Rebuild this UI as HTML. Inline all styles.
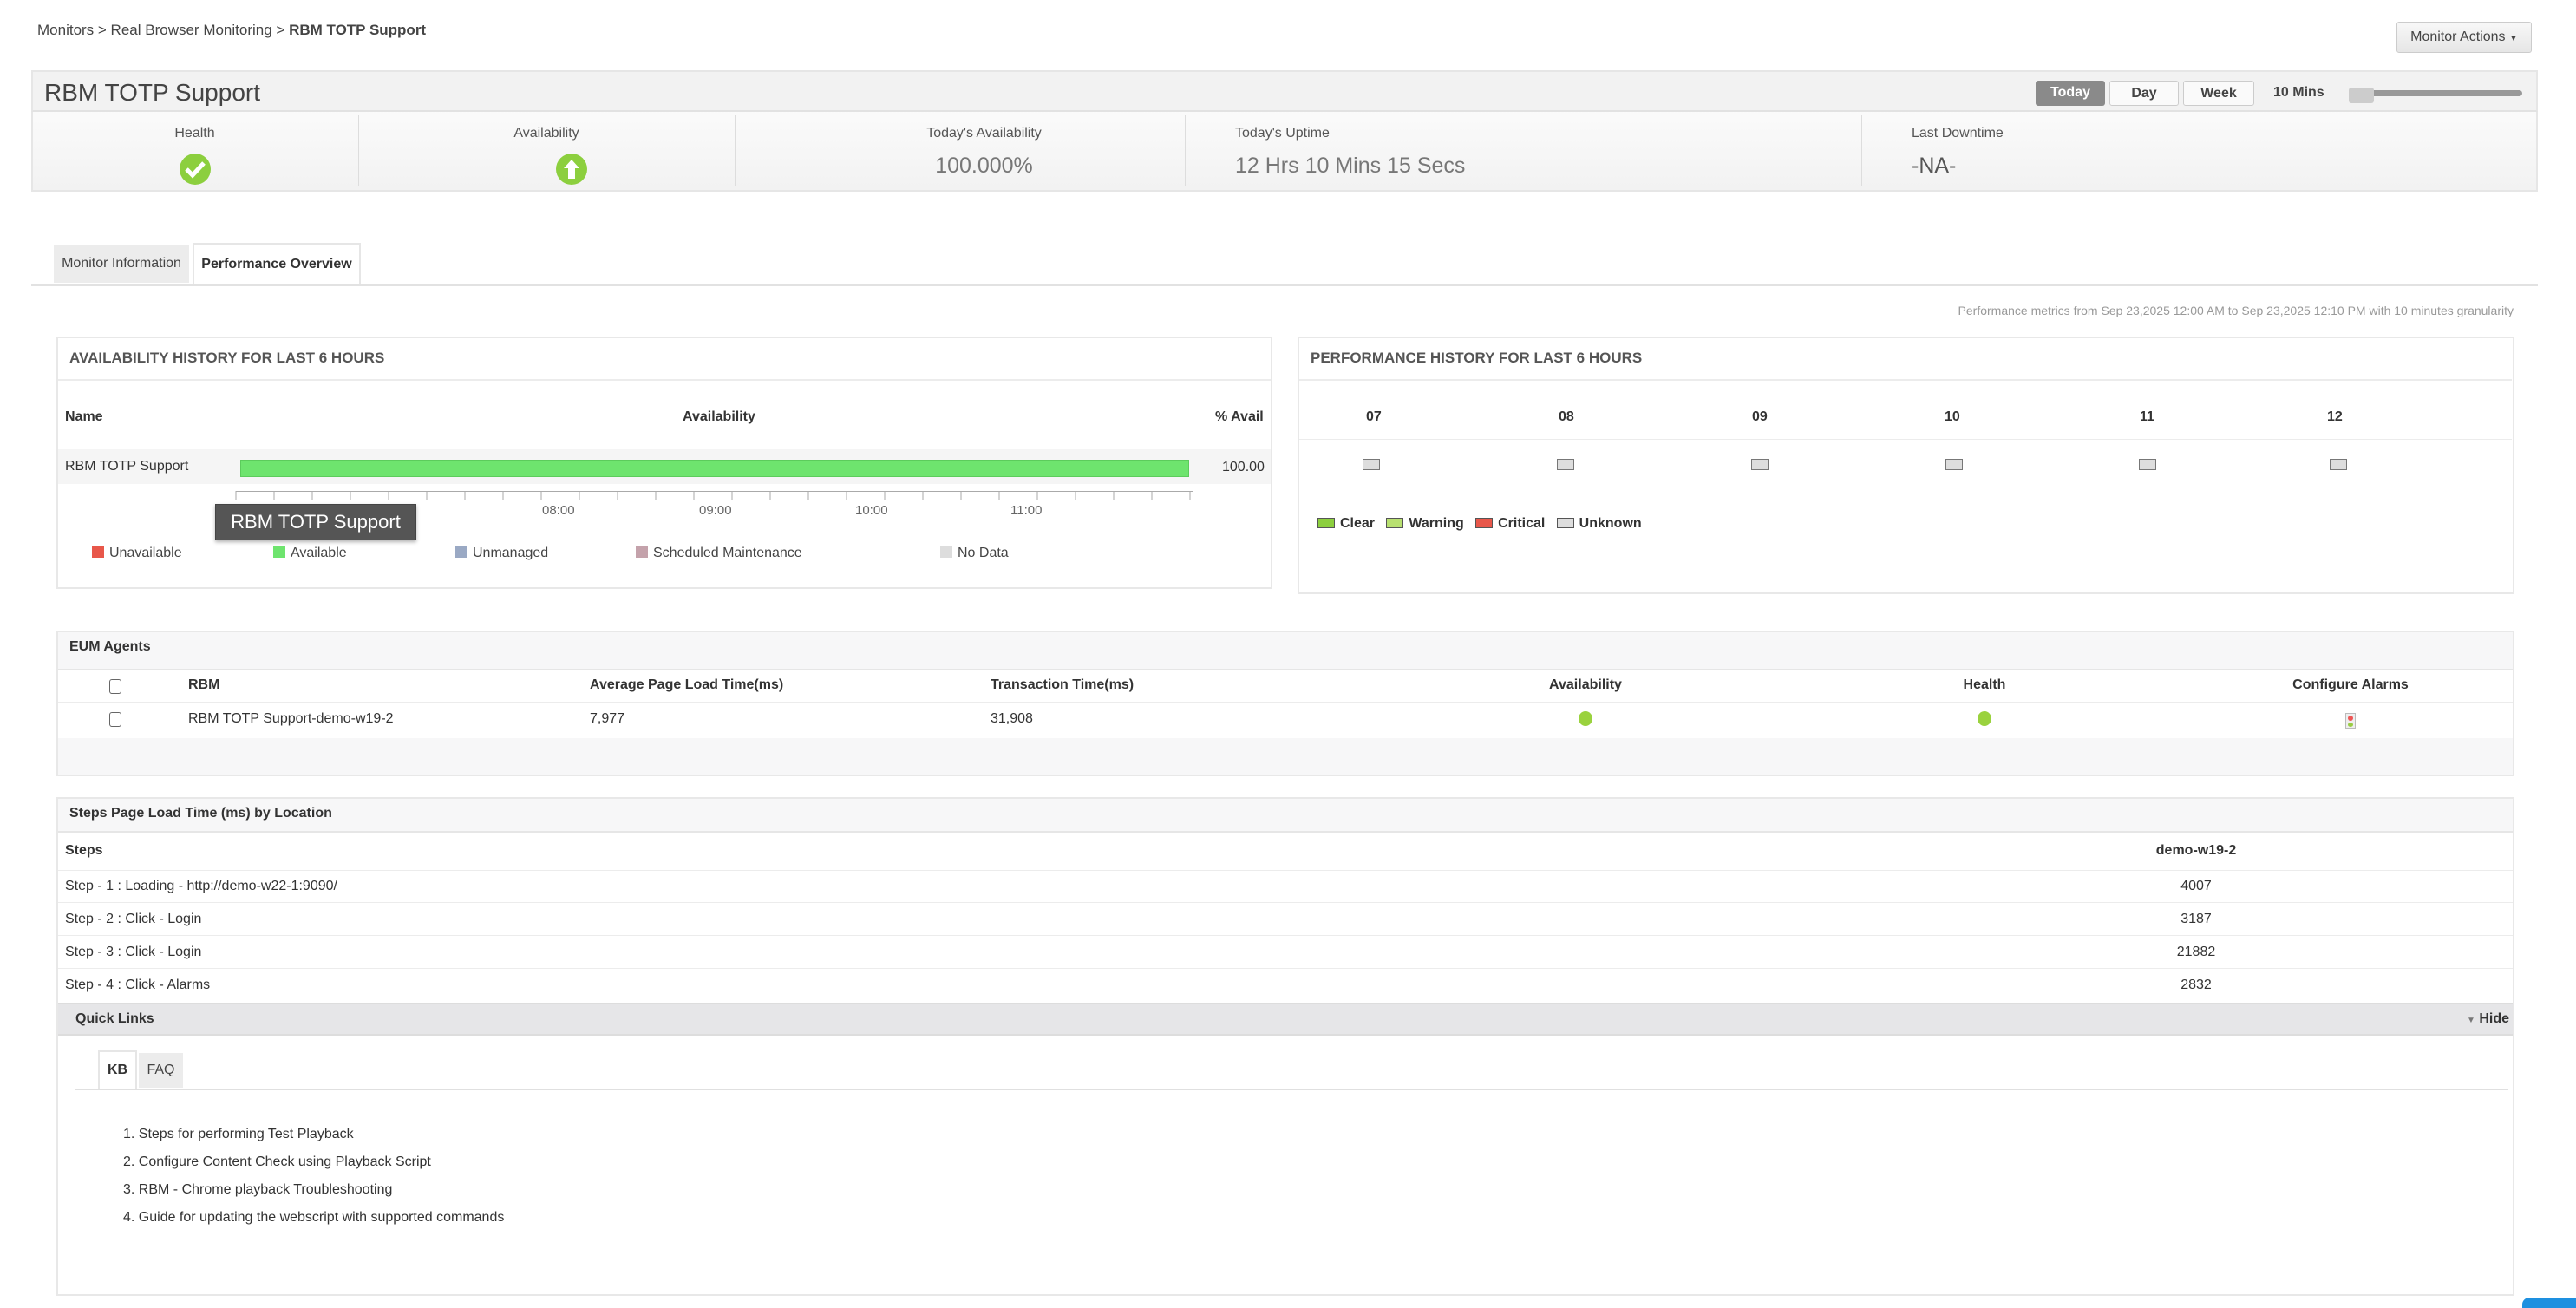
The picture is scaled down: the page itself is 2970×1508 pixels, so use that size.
<!DOCTYPE html>
<html><head><meta charset="utf-8"><style>
*{margin:0;padding:0;box-sizing:border-box}
body{width:2970px;height:1504px;background:#fff;font-family:"Liberation Sans",Arial,sans-serif;color:#333;position:relative;overflow:hidden;font-size:17px}
.a{position:absolute;white-space:nowrap}
.b{font-weight:bold}
.box{position:absolute;border:2px solid #e8e8e8;background:#fff}
.hl{position:absolute;height:2px;background:#ececec}
.sq{display:inline-block;width:14px;height:14px;vertical-align:-1px;margin-right:6px}
</style></head><body>

<div class="a" style="left:43px;top:25px;font-size:17px;color:#444">Monitors &gt; Real Browser Monitoring &gt; <b>RBM TOTP Support</b></div>
<div class="a" style="left:2763px;top:25px;width:156px;height:36px;border:1px solid #ccc;border-radius:3px;background:linear-gradient(#f8f8f8,#e6e6e6);font-size:16px;color:#444;text-align:center;line-height:34px">Monitor Actions <span style="font-size:10px">▼</span></div>

<!-- header -->
<div class="a" style="left:36px;top:81px;width:2890px;height:140px;border:2px solid #e6e6e6;background:linear-gradient(#fff,#f2f2f2)"></div>
<div class="a" style="left:36px;top:81px;width:2890px;height:48px;background:#f2f2f2;border:2px solid #e6e6e6;border-bottom:2px solid #e2e2e2"></div>
<div class="a" style="left:51px;top:91px;font-size:28px;color:#444">RBM TOTP Support</div>
<div class="a" style="left:2347px;top:93px;width:80px;height:29px;background:#8a8a8a;border-radius:3px;color:#fff;font-weight:bold;font-size:16px;text-align:center;line-height:27px">Today</div>
<div class="a" style="left:2432px;top:93px;width:80px;height:29px;background:#fafafa;border:1px solid #ccc;border-radius:3px;color:#444;font-weight:bold;font-size:16px;text-align:center;line-height:27px">Day</div>
<div class="a" style="left:2517px;top:93px;width:82px;height:29px;background:#fafafa;border:1px solid #ccc;border-radius:3px;color:#444;font-weight:bold;font-size:16px;text-align:center;line-height:27px">Week</div>
<div class="a b" style="left:2621px;top:98px;font-size:16px;color:#444">10 Mins</div>
<div class="a" style="left:2712px;top:104px;width:196px;height:7px;background:#999;border-radius:4px"></div>
<div class="a" style="left:2708px;top:101px;width:29px;height:18px;background:#ccc;border-radius:3px"></div>

<div class="a" style="left:413px;top:133px;width:1px;height:82px;background:#ddd"></div>
<div class="a" style="left:847px;top:133px;width:1px;height:82px;background:#ddd"></div>
<div class="a" style="left:1366px;top:133px;width:1px;height:82px;background:#ddd"></div>
<div class="a" style="left:2146px;top:133px;width:1px;height:82px;background:#ddd"></div>
<div class="a" style="left:36px;top:145px;width:377px;text-align:center;font-size:16px;color:#555">Health</div>
<div class="a" style="left:413px;top:145px;width:434px;text-align:center;font-size:16px;color:#555">Availability</div>
<div class="a" style="left:847px;top:145px;width:575px;text-align:center;font-size:16px;color:#555">Today's Availability</div>
<div class="a" style="left:847px;top:177px;width:575px;text-align:center;font-size:25px;color:#777">100.000%</div>
<div class="a" style="left:1424px;top:145px;font-size:16px;color:#555">Today's Uptime</div>
<div class="a" style="left:1424px;top:177px;font-size:25px;color:#777">12 Hrs 10 Mins 15 Secs</div>
<div class="a" style="left:2204px;top:145px;font-size:16px;color:#555">Last Downtime</div>
<div class="a" style="left:2204px;top:177px;font-size:25px;color:#555">-NA-</div>
<svg class="a" style="left:206px;top:176px" width="38" height="38"><circle cx="19" cy="19" r="18" fill="#8ccf3e"/><path d="M9 19 L16 26 L29 12" stroke="#fff" stroke-width="5" fill="none"/></svg>
<svg class="a" style="left:640px;top:176px" width="38" height="38"><circle cx="19" cy="19" r="18" fill="#8ccf3e"/><path d="M19 8 L28 18 L23 18 L23 30 L15 30 L15 18 L10 18Z" fill="#fff"/></svg>

<!-- tabs -->
<div class="a" style="left:62px;top:282px;width:156px;height:44px;background:#ececec;font-size:16px;color:#444;text-align:center;line-height:44px">Monitor Information</div>
<div class="a" style="left:222px;top:280px;width:194px;height:50px;background:#fff;border:2px solid #e6e6e6;border-bottom:none;font-size:16px;font-weight:bold;color:#333;text-align:center;line-height:46px">Performance Overview</div>
<div class="hl" style="left:36px;top:328px;width:2890px;background:#e2e2e2"></div>

<div class="a" style="right:72px;top:350px;font-size:14px;color:#999">Performance metrics from Sep 23,2025 12:00 AM to Sep 23,2025 12:10 PM with 10 minutes granularity</div>

<!-- availability box -->
<div class="box" style="left:65px;top:388px;width:1402px;height:291px"></div>
<div class="a b" style="left:80px;top:403px;font-size:17px;color:#555">AVAILABILITY HISTORY FOR LAST 6 HOURS</div>
<div class="hl" style="left:67px;top:437px;width:1398px"></div>
<div class="a b" style="left:75px;top:472px;font-size:16px">Name</div>
<div class="a b" style="left:787px;top:472px;font-size:16px">Availability</div>
<div class="a b" style="left:1401px;top:472px;font-size:16px">% Avail</div>
<div class="a" style="left:67px;top:518px;width:1398px;height:40px;background:#f5f5f5"></div>
<div class="a" style="left:75px;top:529px;font-size:16px">RBM TOTP Support</div>
<div class="a" style="left:277px;top:530px;width:1094px;height:20px;background:#6ee46e;border:1px solid #5ccc5c"></div>
<div class="a" style="left:1409px;top:530px;font-size:16px">100.00</div>
<div class="a" style="left:272px;top:566px;width:1104px;height:1px;background:#aaa"></div>
<svg class="a" style="left:271px;top:566px" width="1108" height="10"><g stroke="#aaa" stroke-width="1">
<path d="M1 0V10M45 0V10M89 0V10M133 0V10M177 0V10M221 0V10M265 0V10M309 0V10M353 0V10M397 0V10M441 0V10M485 0V10M529 0V10M573 0V10M617 0V10M661 0V10M705 0V10M749 0V10M793 0V10M837 0V10M881 0V10M925 0V10M969 0V10M1013 0V10M1057 0V10M1101 0V10"/></g></svg>
<div class="a" style="left:625px;top:580px;font-size:15px;color:#666">08:00</div>
<div class="a" style="left:806px;top:580px;font-size:15px;color:#666">09:00</div>
<div class="a" style="left:986px;top:580px;font-size:15px;color:#666">10:00</div>
<div class="a" style="left:1165px;top:580px;font-size:15px;color:#666">11:00</div>
<div class="a" style="left:248px;top:581px;width:232px;height:42px;background:#555;border:1px solid #444;box-shadow:0 2px 4px rgba(0,0,0,.3);color:#fff;font-size:22px;line-height:40px;text-align:center">RBM TOTP Support</div>
<div class="a" style="left:106px;top:629px;font-size:16px;color:#444"><span class="sq" style="background:#e8574a"></span>Unavailable</div>
<div class="a" style="left:315px;top:629px;font-size:16px;color:#444"><span class="sq" style="background:#6ee46e"></span>Available</div>
<div class="a" style="left:525px;top:629px;font-size:16px;color:#444"><span class="sq" style="background:#9aa9c4"></span>Unmanaged</div>
<div class="a" style="left:733px;top:629px;font-size:16px;color:#444"><span class="sq" style="background:#c4a2ab"></span>Scheduled Maintenance</div>
<div class="a" style="left:1084px;top:629px;font-size:16px;color:#444"><span class="sq" style="background:#ddd"></span>No Data</div>

<!-- perf box -->
<div class="box" style="left:1496px;top:388px;width:1403px;height:297px"></div>
<div class="a b" style="left:1511px;top:403px;font-size:17px;color:#555">PERFORMANCE HISTORY FOR LAST 6 HOURS</div>
<div class="hl" style="left:1498px;top:437px;width:1398px"></div>
<div class="hl" style="left:1498px;top:506px;width:1398px;height:1px"></div>
<div class="a b" style="left:1575px;top:472px;font-size:16px">07</div>
<div class="a b" style="left:1797px;top:472px;font-size:16px">08</div>
<div class="a b" style="left:2020px;top:472px;font-size:16px">09</div>
<div class="a b" style="left:2242px;top:472px;font-size:16px">10</div>
<div class="a b" style="left:2467px;top:472px;font-size:16px">11</div>
<div class="a b" style="left:2683px;top:472px;font-size:16px">12</div>
<div class="a" style="left:1571px;top:529px;width:20px;height:13px;background:#ddd;border:1px solid #777"></div>
<div class="a" style="left:1795px;top:529px;width:20px;height:13px;background:#ddd;border:1px solid #777"></div>
<div class="a" style="left:2019px;top:529px;width:20px;height:13px;background:#ddd;border:1px solid #777"></div>
<div class="a" style="left:2243px;top:529px;width:20px;height:13px;background:#ddd;border:1px solid #777"></div>
<div class="a" style="left:2466px;top:529px;width:20px;height:13px;background:#ddd;border:1px solid #777"></div>
<div class="a" style="left:2686px;top:529px;width:20px;height:13px;background:#ddd;border:1px solid #777"></div>
<div class="a b" style="left:1519px;top:595px;font-size:16px;color:#333">
<span class="sq" style="width:20px;height:12px;background:#8ccf3e;border:1px solid #555"></span>Clear&nbsp;&nbsp;
<span class="sq" style="width:20px;height:12px;background:#b8e070;border:1px solid #555"></span>Warning&nbsp;&nbsp;
<span class="sq" style="width:20px;height:12px;background:#e8574a;border:1px solid #555"></span>Critical&nbsp;&nbsp;
<span class="sq" style="width:20px;height:12px;background:#ddd;border:1px solid #555"></span>Unknown</div>

<!-- EUM agents -->
<div class="box" style="left:65px;top:727px;width:2834px;height:168px;background:#f7f7f8"></div>
<div class="a b" style="left:80px;top:737px;font-size:16px;color:#333">EUM Agents</div>
<div class="a" style="left:67px;top:771px;width:2830px;height:80px;background:#fff;border-top:2px solid #e6e6e6"></div>
<div class="hl" style="left:67px;top:809px;width:2830px;height:1px"></div>
<div class="a" style="left:126px;top:783px;width:14px;height:17px;border:1.5px solid #666;border-radius:3px;background:#fff"></div>
<div class="a" style="left:126px;top:821px;width:14px;height:17px;border:1.5px solid #666;border-radius:3px;background:#fff"></div>
<div class="a b" style="left:217px;top:781px;font-size:16px">RBM</div>
<div class="a b" style="left:680px;top:781px;font-size:16px">Average Page Load Time(ms)</div>
<div class="a b" style="left:1142px;top:781px;font-size:16px">Transaction Time(ms)</div>
<div class="a b" style="left:1728px;top:781px;width:200px;text-align:center;font-size:16px">Availability</div>
<div class="a b" style="left:2188px;top:781px;width:200px;text-align:center;font-size:16px">Health</div>
<div class="a b" style="left:2610px;top:781px;width:200px;text-align:center;font-size:16px">Configure Alarms</div>
<div class="a" style="left:217px;top:820px;font-size:16px">RBM TOTP Support-demo-w19-2</div>
<div class="a" style="left:680px;top:820px;font-size:16px">7,977</div>
<div class="a" style="left:1142px;top:820px;font-size:16px">31,908</div>
<div class="a" style="left:1820px;top:820px;width:16px;height:17px;border-radius:50%;background:#9ad23e"></div>
<div class="a" style="left:2280px;top:820px;width:16px;height:17px;border-radius:50%;background:#9ad23e"></div>
<div class="a" style="left:2704px;top:822px;width:12px;height:18px;background:#eee;border:1px solid #bbb"><div style="margin:2px auto;width:6px;height:6px;border-radius:50%;background:#e55"></div><div style="margin:0 auto;width:6px;height:5px;border-radius:50%;background:#9c4"></div></div>

<!-- Steps -->
<div class="box" style="left:65px;top:919px;width:2834px;height:575px"></div>
<div class="a" style="left:67px;top:921px;width:2830px;height:39px;background:#f7f7f8;border-bottom:2px solid #e6e6e6"></div>
<div class="a b" style="left:80px;top:929px;font-size:16px;color:#333">Steps Page Load Time (ms) by Location</div>
<div class="a b" style="left:75px;top:972px;font-size:16px">Steps</div>
<div class="a b" style="left:2432px;top:972px;width:200px;text-align:center;font-size:16px">demo-w19-2</div>
<div class="hl" style="left:67px;top:1003px;width:2830px;height:1px"></div>
<div class="hl" style="left:67px;top:1040px;width:2830px;height:1px"></div>
<div class="hl" style="left:67px;top:1078px;width:2830px;height:1px"></div>
<div class="hl" style="left:67px;top:1116px;width:2830px;height:1px"></div>
<div class="a" style="left:75px;top:1013px;font-size:16px">Step - 1 : Loading - http://demo-w22-1:9090/</div>
<div class="a" style="left:75px;top:1051px;font-size:16px">Step - 2 : Click - Login</div>
<div class="a" style="left:75px;top:1089px;font-size:16px">Step - 3 : Click - Login</div>
<div class="a" style="left:75px;top:1127px;font-size:16px">Step - 4 : Click - Alarms</div>
<div class="a" style="left:2432px;top:1013px;width:200px;text-align:center;font-size:16px">4007</div>
<div class="a" style="left:2432px;top:1051px;width:200px;text-align:center;font-size:16px">3187</div>
<div class="a" style="left:2432px;top:1089px;width:200px;text-align:center;font-size:16px">21882</div>
<div class="a" style="left:2432px;top:1127px;width:200px;text-align:center;font-size:16px">2832</div>

<div class="a" style="left:67px;top:1156px;width:2830px;height:38px;background:#e6e6e8;border-top:2px solid #ddd;border-bottom:2px solid #ddd"></div>
<div class="a b" style="left:87px;top:1166px;font-size:16px;color:#333">Quick Links</div>
<div class="a b" style="right:77px;top:1166px;font-size:16px;color:#333"><span style="font-size:10px;color:#777">▼</span> Hide</div>

<div class="a" style="left:113px;top:1211px;width:45px;height:45px;background:#fff;border:2px solid #e6e6e6;border-bottom:none;font-size:16px;font-weight:bold;text-align:center;line-height:42px">KB</div>
<div class="a" style="left:160px;top:1214px;width:51px;height:40px;background:#ececec;font-size:16px;color:#444;text-align:center;line-height:40px">FAQ</div>
<div class="hl" style="left:87px;top:1255px;width:2805px;background:#e0e0e0"></div>
<div class="a" style="left:142px;top:1292px;font-size:16px;color:#333;line-height:32px">1. Steps for performing Test Playback<br>2. Configure Content Check using Playback Script<br>3. RBM - Chrome playback Troubleshooting<br>4. Guide for updating the webscript with supported commands</div>

<div class="a" style="left:2908px;top:1496px;width:62px;height:12px;background:#1e90e0;border-radius:8px 0 0 0"></div>
</body></html>
